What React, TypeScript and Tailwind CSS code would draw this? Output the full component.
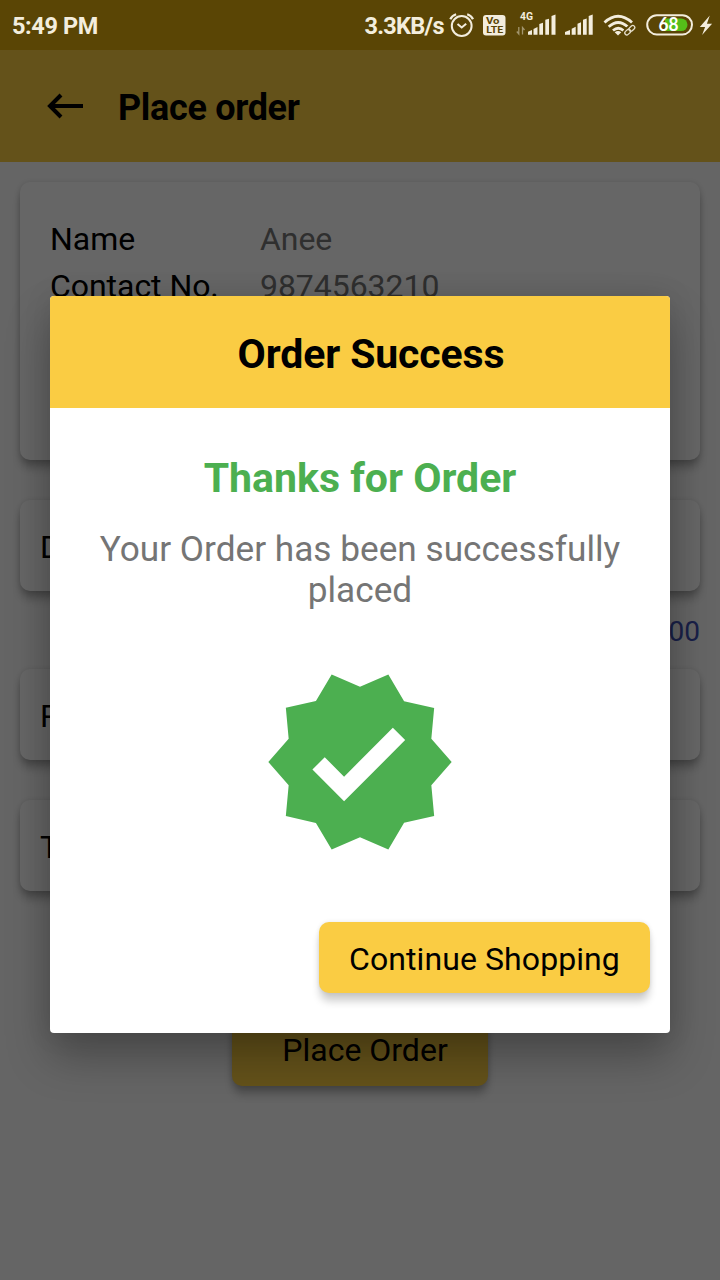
import React from "react";

const CARD_SHADOW = "shadow-[0_9px_10px_-1px_rgba(0,0,0,0.25),0_1px_6px_rgba(0,0,0,0.16)]";

function StatusIcons() {
  return (
    <svg className="h-[50px] w-[276px] shrink-0" viewBox="444 0 276 50" fill="none">
      {/* alarm */}
      <g stroke="#f3eddd" strokeWidth="2">
        <circle cx="461.700" cy="26" r="9.900" />
        <path d="M457.500 24l4.200 3.500 4.500-3.800" />
        <path d="M450.300 19.300q1.500-3.500 5.800-5M473 19.300q-1.500-3.500-5.800-5" strokeWidth="2.200" />
      </g>
      {/* VoLTE */}
      <rect x="483" y="15" width="22.500" height="20.500" rx="3" fill="#f3eddd" />
      <g fill="#5a4505" fontFamily="Roboto, sans-serif" fontWeight="700">
        <text x="486" y="24.200" fontSize="9.500" textLength="13.500" lengthAdjust="spacingAndGlyphs">Vo</text>
        <text x="486.300" y="33.300" fontSize="9.500" textLength="17" lengthAdjust="spacingAndGlyphs">LTE</text>
      </g>
      {/* mobile data */}
      <text x="520" y="20" fontSize="10.500" fontWeight="700" fill="#f3eddd" fontFamily="Roboto, sans-serif" textLength="13" lengthAdjust="spacingAndGlyphs">4G</text>
      <path d="M518.800 27v7l-2-2.500M522.500 34.500v-7l2 2.500" stroke="#a3966f" strokeWidth="1.300" />
      <path
        fill="#f3eddd"
        d="M528 34.700v-3l4-1.700v4.700zM533.500 34.700v-5.700l4-2v7.700zM539.300 34.700v-10.700l3.700-1.300v12zM545.300 34.700v-15l3.700-1v16zM551.500 34.700v-18.700l4-1.500v20.200z"
      />
      <path
        fill="#f3eddd"
        d="M565 34.700v-2.800l5-2v4.800zM571.700 34.700v-6l4-2v8zM577.500 34.700v-11l3.500-1.500v12.500zM583 34.700v-15l3.700-1.300v16.300zM588.700 34.700v-18.700l4-1.500v20.200z"
      />
      {/* wifi with link */}
      <g stroke="#f3eddd" strokeWidth="2.800">
        <path d="M604.500 22.500q13.500-12.500 27.500 0" />
        <path d="M608.700 26.700q9.500-8.500 19 0" />
        <path d="M613 30.500q5.200-4.500 10.500 0" />
      </g>
      <path d="M614.700 32.300q3.300-2.500 6.600 0l-3.300 3.300z" fill="#f3eddd" />
      <g stroke="#5a4505" strokeWidth="4">
        <rect x="-4.500" y="-2.300" width="9" height="4.600" rx="2.300" transform="translate(629.500 30.300) rotate(-42)" />
      </g>
      <g stroke="#e5deca" strokeWidth="1.300">
        <rect x="-6" y="-2" width="6.500" height="4" rx="2" transform="translate(629.800 30.200) rotate(-42)" />
        <rect x="-.5" y="-2" width="6.500" height="4" rx="2" transform="translate(629.800 30.200) rotate(-42)" />
      </g>
      {/* battery */}
      <rect x="647.200" y="15.200" width="44.800" height="19.200" rx="9.600" stroke="#f3eddd" strokeWidth="2" />
      <path d="M665 18.500h16.200a6.300 6.300 0 0 1 0 12.600H665z" fill="#55bd19" />
      <text x="658.500" y="31.300" fontSize="18" fontWeight="700" fill="#fff" fontFamily="Lato, sans-serif" textLength="20" lengthAdjust="spacingAndGlyphs">68</text>
      <path d="M709.800 15.500l-10 11.500h5.300l-3 8 10-11.300h-5.200z" fill="#f3eddd" />
    </svg>
  );
}

function FieldCard({ label, className }: { label: string; className: string }) {
  return (
    <div className={`h-[91px] rounded-[10px] bg-white px-5 text-[32px] leading-[94px] ${CARD_SHADOW} ${className}`}>
      {label}
    </div>
  );
}

function OrderForm() {
  return (
    <div className="flex h-full flex-col bg-[#fdfdfd] pt-[50px]">
      <header className="flex h-28 shrink-0 items-center bg-[#facc43] pl-[46px]">
        <svg className="h-7 w-[38px]" viewBox="0 0 38 28" fill="none" stroke="#000" strokeWidth="4">
          <path d="M37 14H4M15 3L4 14l11 11" />
        </svg>
        <h1 className="ml-[34px] pt-[3px] text-[36px] font-bold leading-none tracking-[-0.33px]">Place order</h1>
      </header>
      <main className="flex flex-col px-5 pt-5">
        <section className={`h-[278px] rounded-[10px] bg-white px-[30px] pt-[34px] text-[32px] ${CARD_SHADOW}`}>
          <dl className="grid grid-cols-[210px_1fr] leading-[47px] tracking-[-0.05px]">
            <dt>Name</dt>
            <dd className="text-[#757575]">Anee</dd>
            <dt>Contact No.</dt>
            <dd className="text-[#757575]">9874563210</dd>
          </dl>
        </section>
        <FieldCard label="D" className="mt-10" />
        <p className="h-[78px] pt-0.5 text-right text-[28px] leading-[78px] text-[#3f51b5]">00</p>
        <FieldCard label="P" className="" />
        <FieldCard label="T" className="mt-10" />
        <button className={`mt-[124px] h-[71px] w-64 self-center rounded-[10px] bg-[#facc43] pb-0.5 pl-2.5 text-[32px] ${CARD_SHADOW}`}>
          Place Order
        </button>
      </main>
    </div>
  );
}

function SuccessDialog() {
  return (
    <div className="absolute inset-0 flex flex-col bg-black/60 px-[50px] pt-[296px]">
      <div
        role="dialog"
        className="flex h-[737px] flex-col overflow-hidden rounded bg-white shadow-[0_24px_44px_rgba(0,0,0,0.28),0_0_28px_rgba(0,0,0,0.1)]"
      >
        <h2 className="h-28 shrink-0 bg-[#facc43] pl-[22px] pt-0.5 text-center text-[41px] font-bold leading-[112px] tracking-[-0.12px]">
          Order Success
        </h2>
        <div className="flex flex-1 flex-col items-center">
          <h3 className="mt-[46px] text-[41px] font-bold leading-[48px] text-[#4caf50]">Thanks for Order</h3>
          <p className="mt-[27px] w-[560px] text-center text-[35.2px] leading-[41px] text-[#757575]">
            Your Order has been successfully placed
          </p>
          <svg className="mt-[51px] size-[200px]" viewBox="0 0 24 24">
            <path
              fill="#4caf50"
              d="M23 12l-2.440-2.790.340-3.690-3.610-.820L15.400 1.500 12 2.960 8.600 1.500 6.710 4.690 3.100 5.500l.340 3.700L1 12l2.440 2.790-.340 3.700 3.610.820L8.600 22.500l3.400-1.470 3.400 1.460 1.890-3.190 3.610-.820-.340-3.690z"
            />
            <path fill="#fff" d="M10.090 16.720l-3.800-3.810 1.480-1.480 2.320 2.330 5.850-5.870 1.480 1.480z" />
          </svg>
          <button className="mb-10 mr-5 mt-auto h-[71px] w-[331px] self-end rounded-[10px] bg-[#facc43] pt-0.5 text-[32px] tracking-[0.08px] shadow-[0_9px_8px_-1px_rgba(0,0,0,0.2),0_0_4px_rgba(0,0,0,0.1)]">
            Continue Shopping
          </button>
        </div>
      </div>
    </div>
  );
}

export default function App() {
  return (
    <div className="relative h-[1280px] w-[720px] overflow-hidden font-['Roboto',sans-serif] text-black">
      <OrderForm />
      <SuccessDialog />
      <div className="absolute inset-x-0 top-0 flex h-[50px] items-center justify-between bg-[#5a4505] pl-3 text-[23.5px] font-bold text-[#f3eddd]">
        <span className="pt-[3px] tracking-[-0.4px]">5:49 PM</span>
        <div className="flex items-center">
          <span className="pt-[3px] tracking-[-0.7px]">3.3KB/s</span>
          <StatusIcons />
        </div>
      </div>
    </div>
  );
}
